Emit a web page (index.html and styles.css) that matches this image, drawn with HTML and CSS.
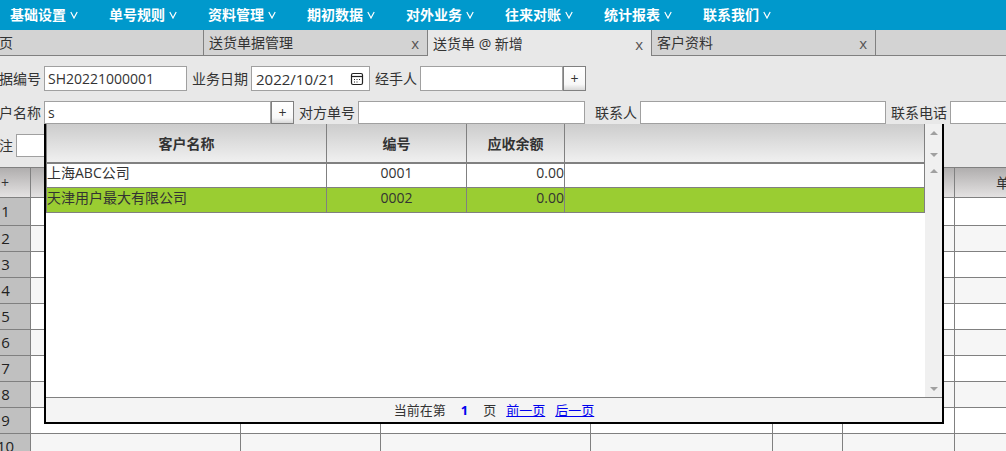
FILE: index.html
```html
<!DOCTYPE html>
<html lang="zh-CN">
<head>
<meta charset="utf-8">
<title>送货单 @ 新增</title>
<link rel="stylesheet" href="styles.css">
</head>
<body>
<nav class="menu">
  <button class="menu-item">基础设置<svg class="chevron" viewBox="0 0 8 8"><path d="M.8 1 4 7 7.200 1"/></svg></button>
  <button class="menu-item">单号规则<svg class="chevron" viewBox="0 0 8 8"><path d="M.8 1 4 7 7.200 1"/></svg></button>
  <button class="menu-item">资料管理<svg class="chevron" viewBox="0 0 8 8"><path d="M.8 1 4 7 7.200 1"/></svg></button>
  <button class="menu-item">期初数据<svg class="chevron" viewBox="0 0 8 8"><path d="M.8 1 4 7 7.200 1"/></svg></button>
  <button class="menu-item">对外业务<svg class="chevron" viewBox="0 0 8 8"><path d="M.8 1 4 7 7.200 1"/></svg></button>
  <button class="menu-item">往来对账<svg class="chevron" viewBox="0 0 8 8"><path d="M.8 1 4 7 7.200 1"/></svg></button>
  <button class="menu-item">统计报表<svg class="chevron" viewBox="0 0 8 8"><path d="M.8 1 4 7 7.200 1"/></svg></button>
  <button class="menu-item">联系我们<svg class="chevron" viewBox="0 0 8 8"><path d="M.8 1 4 7 7.200 1"/></svg></button>
</nav>

<div class="tabs">
  <div class="tab tab-home"><span>页</span></div>
  <div class="tab"><span>送货单据管理</span><button class="tab-close">x</button></div>
  <div class="tab tab-active"><span>送货单 @ 新增</span><button class="tab-close">x</button></div>
  <div class="tab"><span>客户资料</span><button class="tab-close">x</button></div>
  <div class="tab-rest"></div>
</div>

<form class="form">
  <div class="form-row form-row-tall">
    <div class="field"><label for="no">据编号</label><input id="no" class="box w-s" value="SH20221000001"></div>
    <div class="field"><label for="date">业务日期</label>
      <div class="date">
        <input id="date" class="date-input" value="2022/10/21">
        <svg class="calendar" viewBox="0 0 14 14"><rect x="1.500" y="1.500" width="11" height="11" rx="1.500"/><path d="M1.500 4.500h11"/><path class="dots" d="M6.500 7.500h1M9 7.500h1M4 7.500h1M4 10h1M6.500 10h1"/></svg>
      </div>
    </div>
    <div class="field"><label for="agent">经手人</label><div class="combo"><input id="agent" class="box w-s"><button type="button" class="add">+</button></div></div>
  </div>
  <div class="form-row">
    <div class="field"><label for="customer">户名称</label>
      <div class="combo">
        <input id="customer" class="box w-m" value="s"><button type="button" class="add">+</button>
        <div class="popup">
          <div class="popup-body">
            <table class="picker">
              <colgroup><col class="p-name"><col class="p-code"><col class="p-due"><col></colgroup>
              <thead><tr><th>客户名称</th><th>编号</th><th>应收余额</th><th></th></tr></thead>
              <tbody>
                <tr><td>上海ABC公司</td><td class="center">0001</td><td class="right">0.00</td><td></td></tr>
                <tr class="selected"><td>天津用户最大有限公司</td><td class="center">0002</td><td class="right">0.00</td><td></td></tr>
              </tbody>
            </table>
            <div class="scrolls">
              <div class="scroll scroll-head"><i class="up"></i><i class="down"></i></div>
              <div class="scroll scroll-body"><i class="up"></i><i class="down"></i></div>
            </div>
          </div>
          <div class="pager"><span>当前在第</span><b class="page">1</b><span>页</span><a href="#prev">前一页</a><a href="#next">后一页</a></div>
        </div>
      </div>
    </div>
    <div class="field"><label for="ref">对方单号</label><input id="ref" class="box w-m"></div>
    <div class="field field-apart"><label for="contact">联系人</label><input id="contact" class="box w-l"></div>
    <div class="field field-fill"><label for="phone">联系电话</label><input id="phone" class="box"></div>
  </div>
  <div class="form-row">
    <div class="field"><label for="note">注</label><input id="note" class="box w-l"></div>
  </div>
</form>

<div class="sheet">
  <table class="grid">
    <colgroup><col class="g-no"><col class="g-a"><col class="g-b"><col class="g-a"><col class="g-c"><col class="g-d"><col class="g-e"><col></colgroup>
    <thead><tr><th>+</th><th></th><th></th><th></th><th></th><th></th><th></th><th class="unit">单</th></tr></thead>
    <tbody>
      <tr class="first"><th>1</th><td></td><td></td><td></td><td></td><td></td><td></td><td></td></tr>
      <tr><th>2</th><td></td><td></td><td></td><td></td><td></td><td></td><td></td></tr>
      <tr><th>3</th><td></td><td></td><td></td><td></td><td></td><td></td><td></td></tr>
      <tr><th>4</th><td></td><td></td><td></td><td></td><td></td><td></td><td></td></tr>
      <tr><th>5</th><td></td><td></td><td></td><td></td><td></td><td></td><td></td></tr>
      <tr><th>6</th><td></td><td></td><td></td><td></td><td></td><td></td><td></td></tr>
      <tr><th>7</th><td></td><td></td><td></td><td></td><td></td><td></td><td></td></tr>
      <tr><th>8</th><td></td><td></td><td></td><td></td><td></td><td></td><td></td></tr>
      <tr><th>9</th><td></td><td></td><td></td><td></td><td></td><td></td><td></td></tr>
      <tr><th>10</th><td></td><td></td><td></td><td></td><td></td><td></td><td></td></tr>
    </tbody>
  </table>
</div>
</body>
</html>
```

FILE: styles.css
```css
* { box-sizing: border-box; }

body {
  margin: 0;
  height: 100vh;
  display: flex;
  flex-direction: column;
  overflow: hidden;
  background: #e8e8e8;
  color: #333;
  font: 14px/20px "Open Sans", "Noto Sans CJK SC", sans-serif;
}

button, input { font: inherit; color: inherit; margin: 0; }
button { cursor: pointer; }

/* Main menu */
.menu {
  display: flex;
  flex: none;
  height: 30px;
  padding-left: 10px;
  background: #0099cc;
}
.menu-item {
  display: flex;
  align-items: center;
  gap: 4px;
  width: 99px;
  padding: 0;
  border: 0;
  background: none;
  color: #fff;
  font-weight: bold;
  white-space: nowrap;
}
.chevron { width: 8px; height: 8px; fill: none; stroke: #fff; stroke-width: 1.2; }

/* Document tabs */
.tabs { display: flex; flex: none; height: 26px; }
.tab {
  display: flex;
  justify-content: space-between;
  align-items: center;
  flex: none;
  width: 224px;
  padding: 0 8px 0 5px;
  background: #d3d3d3;
  border-right: 1px solid #808080;
  border-bottom: 1px solid #808080;
}
.tab-home { width: 204px; padding-left: 0; }
.tab-home span { margin-left: -1px; }
.tab-active { background: #e8e8e8; border-bottom: 0; padding-top: 2px; }
.tab-rest { flex: 1; background: #d3d3d3; border-bottom: 1px solid #808080; }
.tab-close { padding: 0; border: 0; background: none; font-size: 15px; line-height: 20px; color: #555; }

/* Document header form */
.form {
  display: flex;
  flex-direction: column;
  flex: none;
  gap: 10px;
  margin-left: -1px;
  padding: 10px 0;
}
.form-row { display: flex; gap: 5px; height: 23px; }
.form-row-tall { height: 25px; }
.field { display: flex; flex: none; align-items: center; gap: 3px; height: 100%; white-space: nowrap; }
.field-apart { margin-left: 5px; }
.field-fill { flex: 1; min-width: 0; }
.field-fill .box { flex: 1; min-width: 0; border-right: 0; }
.box, .date {
  height: 100%;
  padding: 0 3px;
  border: 1px solid #a0a0a0;
  border-radius: 0;
  background: #fff;
  outline: 0;
}
.w-s { width: 143px; }
.w-m { width: 227px; }
.w-l { width: 246px; }
.date { display: flex; align-items: center; width: 119px; padding: 0 5px 0 4px; }
.date-input { flex: 1; min-width: 0; padding: 0; border: 0; outline: 0; background: none; font-size: 15px; line-height: 20px; }
.calendar { width: 14px; height: 14px; fill: none; stroke: #222; stroke-width: 1.2; }
.dots { stroke-width: 1.2; }
.combo { position: relative; display: flex; height: 100%; }
.add {
  width: 23px;
  height: 100%;
  padding: 0;
  border: 1px solid #808080;
  background: linear-gradient(#fff, #f8f8f8 75%, #d8d8d8);
  line-height: 20px;
}

/* Customer picker */
.popup {
  position: absolute;
  top: 100%;
  left: 0;
  z-index: 1;
  display: flex;
  flex-direction: column;
  width: 900px;
  height: 300px;
  border: 2px solid #000;
  border-top: 0;
  background: #fff;
}
.popup-body { display: flex; flex: 1; align-items: flex-start; }
.picker {
  flex: 1;
  table-layout: fixed;
  border-collapse: separate;
  border-spacing: 0;
}
.p-name { width: 281px; }
.p-code { width: 140px; }
.p-due { width: 98px; }
.picker th, .picker td { padding: 0; border-right: 1px solid #808080; }
.picker th:first-child, .picker td:first-child { border-left: 1px solid #808080; }
.picker th {
  height: 40px;
  padding-top: 2px;
  border-bottom: 2px solid #808080;
  background: linear-gradient(#cccccc, #f0f0f0);
}
.picker td { height: 24px; line-height: 18px; padding-bottom: 5px; border-bottom: 1px solid #808080; }
.picker .selected td { height: 25px; padding-bottom: 4px; background: #9acd32; }
.picker .center { text-align: center; }
.picker .right { text-align: right; }
.scrolls { display: flex; flex-direction: column; align-self: stretch; width: 17px; }
.scroll {
  display: flex;
  flex-direction: column;
  justify-content: space-between;
  align-items: center;
  padding: 7px 0 6px;
  background: #f0f0f0;
}
.scroll-head { height: 39px; }
.scroll-body { flex: 1; padding-top: 6px; }
.up, .down { border: 4px solid transparent; }
.up { border-top: 0; border-bottom-color: #a0a0a0; }
.down { border-bottom: 0; border-top-color: #a0a0a0; }
.pager {
  display: flex;
  justify-content: center;
  align-items: center;
  height: 25px;
  border-top: 1px solid #808080;
  background: #f4f4f4;
  font-size: 13px;
}
.page { margin: 0 15px; color: #0000ee; }
.pager a { margin-left: 10px; color: #0000ee; }

/* Detail lines */
.sheet { flex: 1; min-height: 0; overflow: hidden; }
.grid {
  width: calc(100% + 80px);
  margin-left: -20px;
  table-layout: fixed;
  border-collapse: separate;
  border-spacing: 0;
}
.g-no { width: 51px; }
.g-a { width: 210px; }
.g-b { width: 140px; }
.g-c { width: 182px; }
.g-d { width: 70px; }
.g-e { width: 112px; }
.grid th, .grid td {
  height: 26px;
  padding: 0;
  border-right: 1px solid #808080;
  border-bottom: 1px solid #808080;
  background: #fff;
  font-weight: normal;
}
.grid .first th, .grid .first td { height: 28px; }
.grid tbody th { padding: 0 0 2px 1px; background: #c0c0c0; font-size: 15px; color: #222; }
.grid tbody tr:nth-child(even) td { background: #f6f6f6; }
.grid thead th {
  height: 31px;
  border-top: 1px solid #808080;
  background: linear-gradient(#b0aeae, #e4e2e2);
}
.grid thead .unit { padding-left: 41px; text-align: left; }
```
